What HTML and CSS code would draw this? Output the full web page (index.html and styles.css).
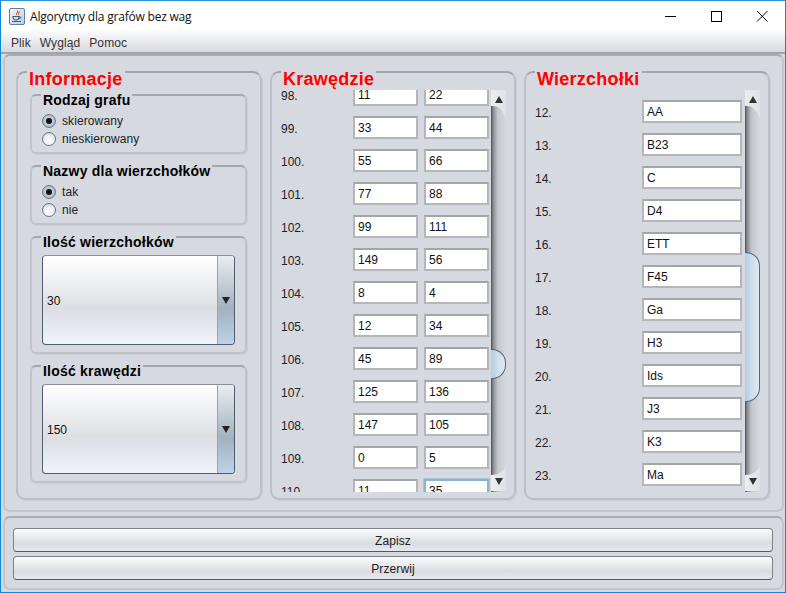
FILE: index.html
```html
<!DOCTYPE html>
<html lang="pl">
<head>
    <meta charset="UTF-8">
    <meta name="viewport" content="width=device-width, initial-scale=1.0">
    <title>Algorytmy dla grafów bez wag</title>
    <link rel="stylesheet" href="styles.css">
</head>
<body>
<div class="window">
    <header class="titlebar">
        <svg class="app-icon" width="16" height="17" viewBox="0 0 16 17">
            <defs>
                <linearGradient id="iconBg" x1="0" y1="0" x2="1" y2="1">
                    <stop offset="0" stop-color="#f4f7fa"/>
                    <stop offset="1" stop-color="#b9cde0"/>
                </linearGradient>
            </defs>
            <rect x="0.5" y="0.5" width="15" height="16" rx="1.500" fill="url(#iconBg)" stroke="#5f7f9c"/>
            <path d="M8.500 2.500c1.500 1.500-2 2.500-.8 4.500M10.500 3.500c-1 .9-1.500 1.800-.5 3.200" fill="none" stroke="#d9622b" stroke-width="1.100"/>
            <path d="M4 8.500h6c0 1 0 3.500-3 3.500s-3-2.500-3-3.500z" fill="none" stroke="#3d5f80" stroke-width="1.100"/>
            <path d="M10 9h1.500c.8 0 .8 1.500-1.500 1.800M3 13.500h9" fill="none" stroke="#3d5f80" stroke-width="1"/>
        </svg>
        <span class="title-text">Algorytmy dla grafów bez wag</span>
        <div class="window-buttons">
            <svg width="46" height="30" viewBox="0 0 46 30"><path d="M18 15.500h11" stroke="#000" stroke-width="1"/></svg>
            <svg width="46" height="30" viewBox="0 0 46 30"><rect x="18.500" y="10.500" width="10" height="10" fill="none" stroke="#000"/></svg>
            <svg width="46" height="30" viewBox="0 0 46 30"><path d="M18 10l10.500 10.500M28.500 10l-10.500 10.500" stroke="#000" stroke-width="1"/></svg>
        </div>
    </header>

    <nav class="menubar">
        <span>Plik</span>
        <span>Wygląd</span>
        <span>Pomoc</span>
    </nav>

    <main class="main-panel">
        <section class="panel">
            <h2 class="panel-title">Informacje</h2>
            <div class="panel-groups">
                <div class="group group-small">
                    <h3 class="group-title">Rodzaj grafu</h3>
                    <div class="radio-row"><span class="radio checked"></span>skierowany</div>
                    <div class="radio-row"><span class="radio"></span>nieskierowany</div>
                </div>
                <div class="group group-small">
                    <h3 class="group-title">Nazwy dla wierzchołków</h3>
                    <div class="radio-row"><span class="radio checked"></span>tak</div>
                    <div class="radio-row"><span class="radio"></span>nie</div>
                </div>
                <div class="group group-big">
                    <h3 class="group-title">Ilość wierzchołków</h3>
                    <div class="combo"><span class="combo-value">30</span><span class="combo-arrow"><i></i></span></div>
                </div>
                <div class="group group-big">
                    <h3 class="group-title">Ilość krawędzi</h3>
                    <div class="combo"><span class="combo-value">150</span><span class="combo-arrow"><i></i></span></div>
                </div>
            </div>
        </section>

        <section class="panel">
            <h2 class="panel-title">Krawędzie</h2>
            <div class="scroller">
                <div class="viewport edges">
                    <div class="rows">
                        <div class="row"><span class="num">98.</span><span class="field">11</span><span class="field">22</span></div>
                        <div class="row"><span class="num">99.</span><span class="field">33</span><span class="field">44</span></div>
                        <div class="row"><span class="num">100.</span><span class="field">55</span><span class="field">66</span></div>
                        <div class="row"><span class="num">101.</span><span class="field">77</span><span class="field">88</span></div>
                        <div class="row"><span class="num">102.</span><span class="field">99</span><span class="field">111</span></div>
                        <div class="row"><span class="num">103.</span><span class="field">149</span><span class="field">56</span></div>
                        <div class="row"><span class="num">104.</span><span class="field">8</span><span class="field">4</span></div>
                        <div class="row"><span class="num">105.</span><span class="field">12</span><span class="field">34</span></div>
                        <div class="row"><span class="num">106.</span><span class="field">45</span><span class="field">89</span></div>
                        <div class="row"><span class="num">107.</span><span class="field">125</span><span class="field">136</span></div>
                        <div class="row"><span class="num">108.</span><span class="field">147</span><span class="field">105</span></div>
                        <div class="row"><span class="num">109.</span><span class="field">0</span><span class="field">5</span></div>
                        <div class="row"><span class="num">110.</span><span class="field">11</span><span class="field focused">35</span></div>
                    </div>
                </div>
                <div class="scrollbar">
                    <div class="sb-btn sb-up"><i></i></div>
                    <div class="sb-thumb edges-thumb"></div>
                    <div class="sb-btn sb-down"><i></i></div>
                </div>
            </div>
        </section>

        <section class="panel">
            <h2 class="panel-title">Wierzchołki</h2>
            <div class="scroller">
                <div class="viewport nodes">
                    <div class="rows">
                        <div class="row"><span class="num"></span><span class="field wide"></span></div>
                        <div class="row"><span class="num">12.</span><span class="field wide">AA</span></div>
                        <div class="row"><span class="num">13.</span><span class="field wide">B23</span></div>
                        <div class="row"><span class="num">14.</span><span class="field wide">C</span></div>
                        <div class="row"><span class="num">15.</span><span class="field wide">D4</span></div>
                        <div class="row"><span class="num">16.</span><span class="field wide">ETT</span></div>
                        <div class="row"><span class="num">17.</span><span class="field wide">F45</span></div>
                        <div class="row"><span class="num">18.</span><span class="field wide">Ga</span></div>
                        <div class="row"><span class="num">19.</span><span class="field wide">H3</span></div>
                        <div class="row"><span class="num">20.</span><span class="field wide">Ids</span></div>
                        <div class="row"><span class="num">21.</span><span class="field wide">J3</span></div>
                        <div class="row"><span class="num">22.</span><span class="field wide">K3</span></div>
                        <div class="row"><span class="num">23.</span><span class="field wide">Ma</span></div>
                    </div>
                </div>
                <div class="scrollbar">
                    <div class="sb-btn sb-up"><i></i></div>
                    <div class="sb-thumb nodes-thumb"></div>
                    <div class="sb-btn sb-down"><i></i></div>
                </div>
            </div>
        </section>
    </main>

    <footer class="bottom-panel">
        <button class="action" type="button">Zapisz</button>
        <button class="action" type="button">Przerwij</button>
    </footer>
</div>
</body>
</html>
```

FILE: styles.css
```css
* {
    box-sizing: border-box;
}

html, body {
    margin: 0;
    height: 100%;
    overflow: hidden;
}

body {
    font-family: "Liberation Sans", Arial, sans-serif;
    font-size: 12px;
    color: #111;
}

.window {
    width: 786px;
    height: 593px;
    display: flex;
    flex-direction: column;
    border: 1px solid #1088d8;
    border-top-color: #2a95dc;
    background: #d6d9e0;
}

.titlebar {
    height: 30px;
    background: #fff;
    display: flex;
    align-items: center;
    padding-left: 8px;
    flex: none;
}

.app-icon {
    margin-right: 5px;
}

.title-text {
    font-family: "Open Sans", sans-serif;
    font-size: 12px;
    color: #111;
    letter-spacing: -0.2px;
}

.window-buttons {
    margin-left: auto;
    display: flex;
}

.menubar {
    height: 23px;
    flex: none;
    display: flex;
    align-items: center;
    gap: 9px;
    padding: 2px 0 0 10px;
    color: #333;
    letter-spacing: 0.1px;
    background: linear-gradient(#fbfbfc, #d7dadf);
    border-bottom: 2px solid #a2a4a9;
}

.main-panel {
    height: 458px;
    flex: none;
    margin: 0 1px 0 2px;
    padding: 15px 11px 10px;
    display: grid;
    grid-template-columns: repeat(3, 246px);
    column-gap: 8px;
    border: 2px solid #c2c5cb;
    border-top-color: #a9acb2;
    border-radius: 7px;
}

.panel {
    border: 2px solid #bcbfc5;
    border-top-color: #a2a5ab;
    border-radius: 9px;
    min-height: 0;
    box-shadow: 1px 1px 0 #c9ccd2;
}

.panel-title {
    margin: -3px 0 0 9px;
    padding: 0 2px;
    width: fit-content;
    height: 18px;
    font-size: 18px;
    line-height: 18px;
    font-weight: bold;
    letter-spacing: 0.25px;
    color: #ff0000;
    background: #d6d9e0;
}

.panel-groups {
    display: flex;
    flex-direction: column;
    gap: 11px;
    padding: 6px 13px 0 12px;
}

.group {
    border: 2px solid #c0c3c9;
    border-top-color: #a5a8ae;
    border-radius: 6px;
    padding: 0 10px;
    box-shadow: 1px 1px 0 #cbced4;
}

.group-small {
    height: 60px;
}

.group-big {
    height: 118px;
}

.group-title {
    margin: -4px 0 0 -1px;
    padding: 0 2px;
    width: fit-content;
    height: 16px;
    font-size: 14px;
    line-height: 16px;
    font-weight: bold;
    letter-spacing: 0.22px;
    color: #000;
    background: #d6d9e0;
}

.radio-row {
    display: flex;
    align-items: center;
    height: 18px;
    color: #222;
    letter-spacing: 0.1px;
}

.group-small .group-title + .radio-row {
    margin-top: 4px;
}

.radio {
    width: 14px;
    height: 14px;
    margin-right: 6px;
    border-radius: 50%;
    border: 1px solid #6a7582;
    background: radial-gradient(circle at 50% 65%, #fdfdfe, #eceef1 55%, #b9bfc8);
    display: flex;
    align-items: center;
    justify-content: center;
}

.radio.checked {
    background: radial-gradient(circle, #d4dce6, #9fb0c3);
}

.radio.checked::after {
    content: "";
    width: 6px;
    height: 6px;
    border-radius: 50%;
    background: #111;
}

.combo {
    height: 90px;
    margin-top: 5px;
    display: flex;
    border: 1px solid #4e5d6d;
    border-top-color: #8b9098;
    border-radius: 4px;
    overflow: hidden;
    background: linear-gradient(#ffffff, #dcdee3 60%, #e0e3ea 70%, #f1f3fb);
}

.combo-value {
    flex: 1;
    align-self: center;
    padding: 2px 0 0 4px;
}

.combo-arrow {
    width: 17px;
    border-left: 1px solid #98a4b0;
    background: linear-gradient(#eaedf1, #a3b1bf 60%, #bdd2e8);
    display: flex;
    align-items: center;
    justify-content: center;
}

.combo-arrow i {
    width: 0;
    height: 0;
    border-left: 4px solid transparent;
    border-right: 4px solid transparent;
    border-top: 7px solid #222;
}

.scroller {
    display: flex;
    margin: 2px 7px 0 4px;
    height: 402px;
}

.viewport {
    width: 215px;
    overflow: hidden;
    flex: none;
}

.rows {
    display: flex;
    flex-direction: column;
    gap: 10px;
}

.edges .rows {
    margin-top: -7px;
}

.nodes .rows {
    margin-top: -23px;
}

.nodes {
    height: 397px;
}

.row {
    display: flex;
    align-items: center;
    height: 23px;
    flex: none;
}

.num {
    width: 77px;
    padding: 2px 0 0 5px;
    color: #222;
}

.nodes .num {
    width: 112px;
}

.field {
    width: 65px;
    height: 23px;
    margin-right: 6px;
    padding: 1px 0 0 3px;
    line-height: 18px;
    background: #fff;
    border: 2px solid #b4b6ba;
    border-top-color: #a3a5a9;
    color: #111;
}

.field.wide {
    width: 100px;
    margin-right: 0;
}

.field:last-child {
    margin-right: 0;
}

.field.focused {
    border-color: #8fb2d0;
    box-shadow: 0 0 0 1px #a9c4da;
}

.scrollbar {
    position: relative;
    width: 15px;
    flex: none;
    background: linear-gradient(90deg, #4a4c50 0, #87898e 2px, #c4c7cc 45%, #d6d9e0);
}

.sb-btn {
    position: absolute;
    left: 0;
    width: 15px;
    height: 28px;
    background: linear-gradient(90deg, #eceef1, #dfe2e7);
    display: flex;
    justify-content: center;
}

.sb-btn i {
    width: 0;
    height: 0;
    border-left: 4px solid transparent;
    border-right: 4px solid transparent;
}

.sb-up {
    top: 0;
    clip-path: polygon(0 0, 100% 0, 100% 100%, 75% 75%, 45% 60%, 0 56%);
    padding-top: 6px;
}

.sb-up i {
    border-bottom: 7px solid #333;
}

.sb-down {
    bottom: 1px;
    height: 24px;
    clip-path: polygon(0 33%, 45% 30%, 75% 18%, 100% 0, 100% 100%, 0 100%);
    padding-top: 11px;
}

.sb-down i {
    border-top: 7px solid #333;
}

.sb-thumb {
    position: absolute;
    left: 0;
    width: 15px;
    border: 1px solid #4e6880;
    border-left: 0;
    border-radius: 0 14px 14px 0;
    background: linear-gradient(90deg, #b5cce3, #cfdfee 50%, #e0e8f0);
}

.edges-thumb {
    top: 259px;
    height: 30px;
}

.nodes-thumb {
    top: 162px;
    height: 150px;
}

.bottom-panel {
    flex: 1;
    margin: 4px 1px 2px 2px;
    padding: 10px 9px 0 8px;
    display: flex;
    flex-direction: column;
    gap: 4px;
    border: 2px solid #c2c5cb;
    border-top-color: #a9acb2;
    border-radius: 7px;
}

.action {
    height: 24px;
    padding: 2px 0 0;
    font-family: "Liberation Sans", Arial, sans-serif;
    font-size: 12px;
    letter-spacing: 0.1px;
    color: #222;
    border: 1px solid #7e8288;
    border-bottom-color: #55585e;
    border-radius: 4px;
    background: linear-gradient(#fdfdfe, #dadce1 65%, #e6e8ee);
}
```
